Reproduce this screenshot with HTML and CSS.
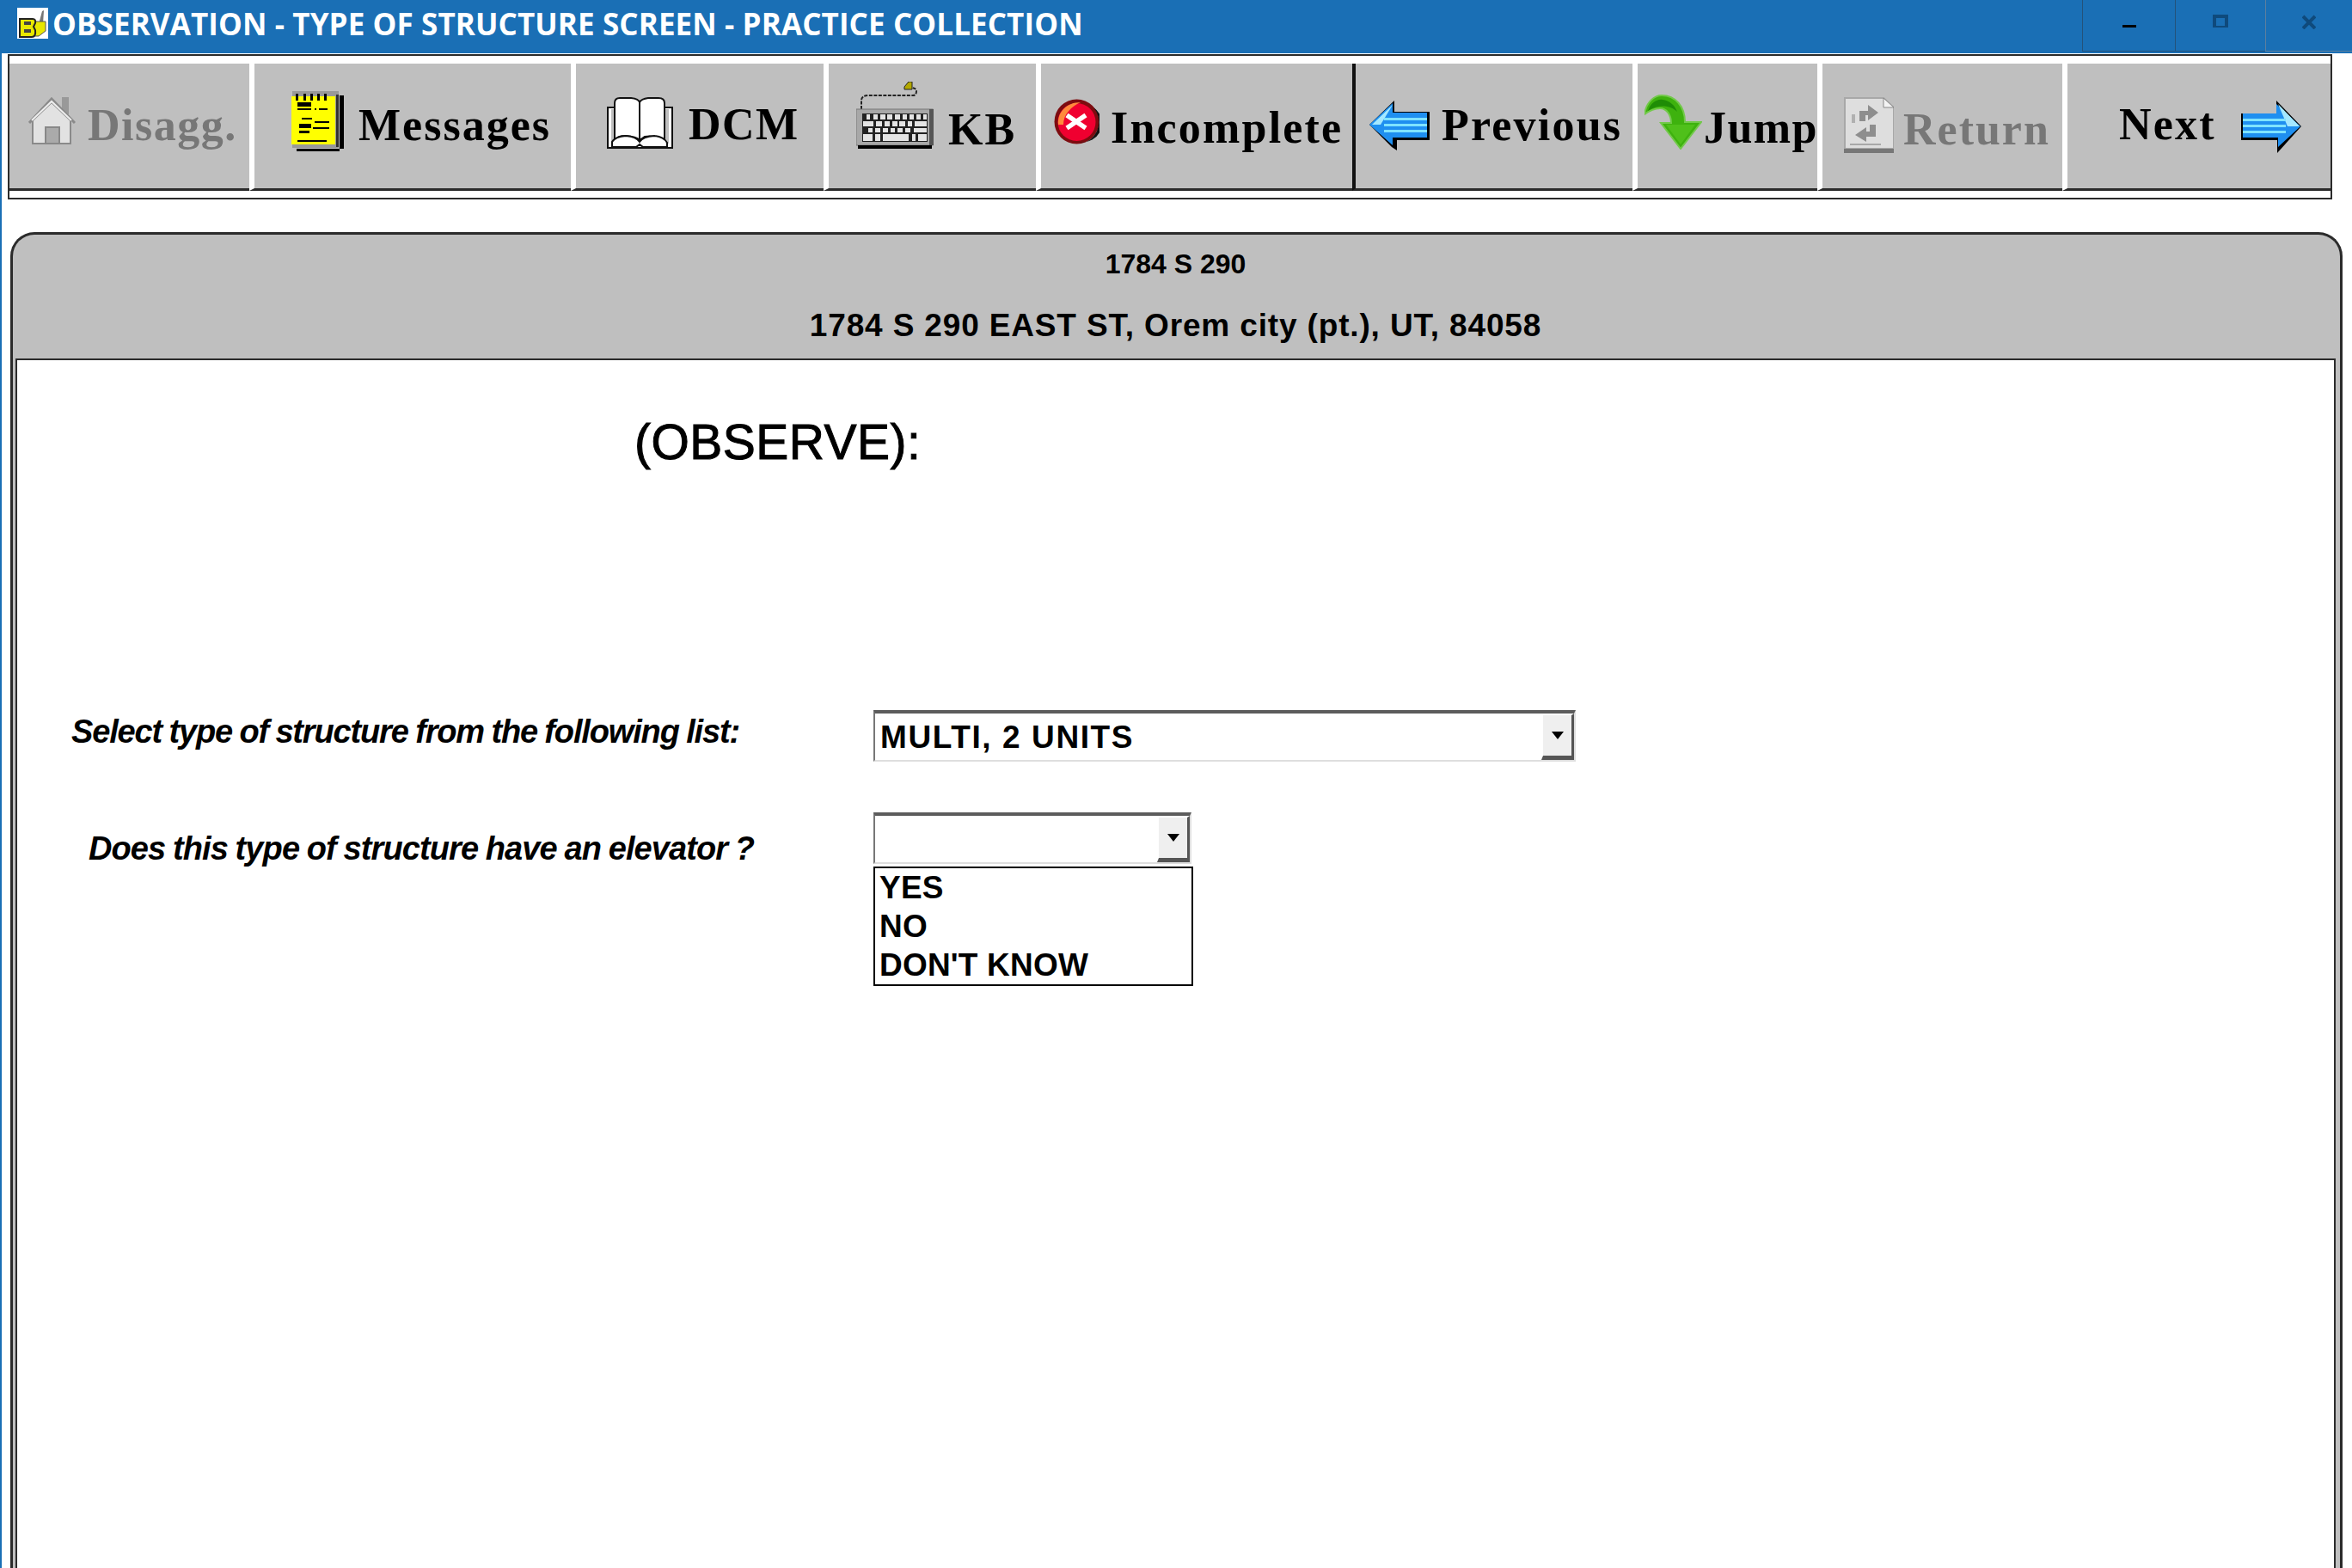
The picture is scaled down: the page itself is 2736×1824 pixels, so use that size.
FILE: index.html
```html
<!DOCTYPE html>
<html lang="en">
<head>
<meta charset="utf-8">
<title>OBSERVATION - TYPE OF STRUCTURE SCREEN - PRACTICE COLLECTION</title>
<link rel="stylesheet" href="styles.css">
</head>
<body>
<header class="titlebar">
  <svg class="appicon" viewBox="0 0 36 36">
    <rect width="36" height="36" fill="#fff"/>
    <path d="M25 19 L29 4 L31 3 L30 19 Z" fill="#777"/>
    <path d="M18 16 H33 V27 L25 33 H18 Z" fill="#e8e800" stroke="#555"/>
    <path d="M3 13 H18 Q22 13 21 18 L19 22 L21 26 Q22 34 17 34 H3 Z" fill="#e8e800" stroke="#222" stroke-width="2"/>
    <rect x="8" y="16" width="8" height="4" fill="#444"/>
    <rect x="8" y="25" width="8" height="4" fill="#444"/>
  </svg>
  <span class="title">OBSERVATION - TYPE OF STRUCTURE SCREEN - PRACTICE COLLECTION</span>
  <div class="winctls">
    <div class="winbtn"><svg width="16" height="32" viewBox="0 0 16 32"><rect y="29" width="16" height="4" fill="#000"/></svg></div>
    <div class="winbtn"><svg width="18" height="32" viewBox="0 0 18 32"><rect x="2" y="19" width="14" height="13" fill="none" stroke="#0f4a7c" stroke-width="4"/></svg></div>
    <div class="winbtn"><svg width="16" height="34" viewBox="0 0 16 34"><path d="M1 19 L15 33 M15 19 L1 33" stroke="#0f4a7c" stroke-width="4" fill="none"/></svg></div>
  </div>
</header>

<nav class="toolbar">
  <div class="btn b-disagg off">
    <svg class="ic" width="55" height="55" viewBox="0 0 55 55">
      <rect x="39" y="0" width="8" height="20" fill="#999"/>
      <path d="M5 27 L27 6 L49 27 V54 H5 Z" fill="#e2e2e2" stroke="#8a8a8a" stroke-width="2"/>
      <path d="M1 30 L27 2 L54 30" fill="none" stroke="#8a8a8a" stroke-width="3"/>
      <path d="M4 27 L27 5 L50 27" fill="none" stroke="#eee" stroke-width="2"/>
      <rect x="20" y="35" width="16" height="19" fill="#aaa" stroke="#888" stroke-width="2"/>
    </svg>
    <span class="lbl">Disagg.</span>
  </div>
  <div class="btn b-messages">
    <svg class="ic" width="61" height="71" viewBox="0 0 61 71">
      <rect x="1" y="1" width="54" height="66" fill="#999"/>
      <rect x="56" y="6" width="5" height="62" fill="#000"/>
      <rect x="6" y="68" width="50" height="3" fill="#000"/>
      <path d="M52 5 H55 V66 H52 Z" fill="#333"/>
      <rect x="0" y="7" width="51" height="56" fill="#ffff00"/>
      <g fill="#000">
        <rect x="5" y="4" width="3" height="8"/><rect x="14" y="4" width="3" height="8"/><rect x="22" y="4" width="3" height="8"/><rect x="30" y="4" width="3" height="8"/><rect x="38" y="4" width="3" height="8"/>
        <rect x="7" y="14" width="16" height="5"/><rect x="7" y="21" width="16" height="2"/><rect x="27" y="21" width="2" height="2"/><rect x="32" y="21" width="10" height="2"/>
        <rect x="12" y="32" width="12" height="2"/><rect x="27" y="36" width="17" height="2"/><rect x="9" y="39" width="14" height="5"/><rect x="25" y="43" width="19" height="2"/><rect x="9" y="47" width="12" height="3"/><rect x="7" y="58" width="34" height="2"/>
      </g>
    </svg>
    <span class="lbl">Messages</span>
  </div>
  <div class="btn b-dcm">
    <svg class="ic" width="77" height="60" viewBox="0 0 77 60">
      <path d="M1 12 H76 V59 H1 Z" fill="#fff" stroke="#111" stroke-width="2"/>
      <rect x="5" y="14" width="67" height="40" fill="#bfbfbf"/>
      <path d="M9 7 Q9 1 15 1 H28 Q37 2 38 6 Q40 2 48 1 H60 Q67 1 67 7 V50 Q55 44 44 46 L38 50 Q34 46 22 45 Q12 45 9 50 Z" fill="#fff" stroke="#111" stroke-width="2"/>
      <path d="M38 6 V55" stroke="#111" stroke-width="2"/>
      <path d="M6 58 V52 Q10 46 22 45 Q34 46 38 52 Q42 46 55 45 Q66 46 70 53 V58 H42 L38 55 L34 58 Z" fill="#fff" stroke="#111" stroke-width="2"/>
    </svg>
    <span class="lbl">DCM</span>
  </div>
  <div class="btn b-kb">
    <svg class="ic" width="91" height="78" viewBox="0 0 91 78">
      <path d="M6 32 V21 Q7 16 14 16 H66 Q70 16 70 11 Q70 7 62 7" fill="none" stroke="#222" stroke-width="2" stroke-dasharray="4 1.5"/>
      <path d="M56 6 L61 0 H65 V9 H56 Z" fill="#b3a800" stroke="#222"/>
      <rect x="0" y="32" width="89" height="42" fill="#a8a8a8" stroke="#777"/>
      <rect x="85" y="32" width="5" height="42" fill="#555"/>
      <rect x="2" y="74" width="86" height="4" fill="#000"/>
      <rect x="7" y="37" width="76" height="33" fill="#222"/>
      <g fill="#e4e4e4">
        <rect x="12" y="38" width="4" height="6"/><rect x="20" y="38" width="5" height="6"/><rect x="28" y="38" width="6" height="6"/><rect x="36" y="38" width="6" height="6"/><rect x="45" y="38" width="6" height="6"/><rect x="54" y="38" width="5" height="6"/><rect x="62" y="38" width="5" height="6"/><rect x="70" y="38" width="5" height="6"/><rect x="78" y="38" width="4" height="6"/>
        <rect x="8" y="46" width="12" height="6"/><rect x="23" y="46" width="7" height="6"/><rect x="33" y="46" width="6" height="6"/><rect x="42" y="46" width="6" height="6"/><rect x="50" y="46" width="7" height="6"/><rect x="60" y="46" width="5" height="6"/><rect x="68" y="46" width="14" height="6"/>
        <rect x="14" y="54" width="5" height="5"/><rect x="22" y="54" width="6" height="5"/><rect x="31" y="54" width="6" height="5"/><rect x="40" y="54" width="5" height="5"/><rect x="48" y="54" width="6" height="5"/><rect x="57" y="54" width="6" height="5"/><rect x="67" y="54" width="15" height="5"/>
        <rect x="8" y="61" width="11" height="8"/><rect x="22" y="61" width="6" height="8"/><rect x="31" y="61" width="30" height="8"/><rect x="65" y="61" width="4" height="8"/><rect x="72" y="61" width="10" height="8"/>
      </g>
    </svg>
    <span class="lbl">KB</span>
  </div>
  <div class="btn b-incomplete">
    <svg class="ic" width="53" height="53" viewBox="0 0 53 53">
      <ellipse cx="26.5" cy="26.5" rx="26" ry="26" fill="#7d0c10"/>
      <path d="M46 10 A26 26 0 0 1 38 50 L30 50 A22 22 0 0 0 46 10 Z" fill="#111"/>
      <circle cx="26.5" cy="27" r="22" fill="#f00030"/>
      <path d="M5 30 C4 15 15 4 31 4 C20 9 11 18 11 30 Z" fill="#ff8a3c"/>
      <path d="M15 19 L37 34 M37 19 L15 34" stroke="#fff" stroke-width="5.5" fill="none"/>
    </svg>
    <span class="lbl">Incomplete</span>
  </div>
  <div class="btn b-previous">
    <svg class="ic" width="71" height="58" viewBox="0 0 71 58">
      <path d="M30 0 V13 H71 V46 H33 V58 L27 54 L1 28 Z" fill="#000"/>
      <path d="M28 3 V14 H68 V43 H28 V52 L1 28 Z" fill="#1f8ff0"/>
      <path d="M28 5 L4 28 L14 28 Z" fill="#a5e8ff"/>
      <rect x="18" y="20" width="50" height="3" fill="#7fe3ff"/><rect x="18" y="27" width="50" height="3" fill="#7fe3ff"/><rect x="18" y="34" width="50" height="3" fill="#7fe3ff"/>
    </svg>
    <span class="lbl">Previous</span>
  </div>
  <div class="btn b-jump">
    <svg class="ic" width="67" height="64" viewBox="0 0 67 64">
      <path d="M0 23 C2 8 12 1 20 1 C36 1 47 14 47 32 L66 32 L42 63 L19 33 L31 33 C31 24 26 16 18 16 C10 16 4 20 0 23 Z" fill="#3eb20e" stroke="#72c94a" stroke-width="2"/>
      <path d="M4 19 C7 10 14 5 21 6 C29 7 35 12 38 20 C30 12 16 11 4 19 Z" fill="#1f8c06"/>
      <path d="M42 58 L59 35 H25 Z" fill="#4fc01a"/>
    </svg>
    <span class="lbl">Jump</span>
  </div>
  <div class="btn b-return off">
    <svg class="ic" width="58" height="65" viewBox="0 0 58 65">
      <path d="M1 1 H46 L58 12 V60 H1 Z" fill="#dedede" stroke="#a8a8a8" stroke-width="2"/>
      <path d="M46 1 V12 H58 Z" fill="#f3f3f3" stroke="#888"/>
      <rect x="0" y="60" width="58" height="5" fill="#777"/>
      <path d="M18 28 V16 H28 V9 L40 18 L28 27 V21 H25 V28 Z" fill="#8e8e8e"/>
      <path d="M37 32 V46 H26 V52 L13 44 L26 35 V40 H30 V32 Z" fill="#8e8e8e"/>
      <rect x="9" y="20" width="4" height="10" fill="#b0b0b0"/>
      <rect x="7" y="54" width="36" height="2" fill="#a8a8a8"/>
    </svg>
    <span class="lbl">Return</span>
  </div>
  <div class="btn b-next">
    <span class="lbl">Next</span>
    <svg class="ic" width="71" height="61" viewBox="0 0 71 61">
      <path d="M41 0 L70 30 L42 61 V46 H0 V15 H41 Z" fill="#000"/>
      <path d="M41 4 L69 30 L43 54 V43 H2 V15 H41 Z" fill="#1f8ff0"/>
      <path d="M43 4 L68 30 L54 30 Z" fill="#a5e8ff"/>
      <rect x="2" y="21" width="50" height="3" fill="#7fe3ff"/><rect x="2" y="28" width="50" height="3" fill="#7fe3ff"/><rect x="2" y="35" width="50" height="3" fill="#7fe3ff"/>
    </svg>
  </div>
</nav>

<main class="panel">
  <div class="panel-head">
    <div class="addr-short">1784 S 290</div>
    <div class="addr-full">1784 S 290 EAST ST, Orem city (pt.), UT, 84058</div>
  </div>
  <div class="content">
    <h1 class="observe">(OBSERVE):</h1>
    <div class="row row-type">
      <label class="q">Select type of structure from the following list:</label>
      <div class="combo combo-wide">
        <span class="combo-val">MULTI, 2 UNITS</span>
        <span class="combo-arrow"><i class="tri"></i></span>
      </div>
    </div>
    <div class="row row-elev">
      <label class="q">Does this type of structure have an elevator ?</label>
      <div class="combo combo-narrow">
        <span class="combo-val"></span>
        <span class="combo-arrow"><i class="tri"></i></span>
        <ul class="menu">
          <li>YES</li>
          <li>NO</li>
          <li>DON'T KNOW</li>
        </ul>
      </div>
    </div>
  </div>
</main>
</body>
</html>
```

FILE: styles.css
```css
* { box-sizing: border-box; }
html, body { margin: 0; padding: 0; }
body {
  width: 2736px;
  height: 1824px;
  overflow: hidden;
  background: #fff;
  border-left: 2px solid #1a6fb5;
  font-family: "Liberation Sans", Arial, sans-serif;
  color: #000;
}

/* title bar */
.titlebar {
  height: 62px;
  margin-left: -2px;
  background: #1a6fb5;
  display: flex;
  align-items: flex-start;
  padding-left: 20px;
}
.appicon { width: 36px; height: 36px; margin-top: 9px; flex: none; }
.title {
  margin-left: 5px;
  font-family: "Open Sans", sans-serif;
  font-weight: 700;
  font-size: 35px;
  line-height: 56px;
  letter-spacing: 0.1px;
  color: #fff;
  white-space: nowrap;
}
.winctls { margin-left: auto; display: flex; height: 60px; }
.winbtn {
  width: 107px;
  display: flex;
  justify-content: center;
  border-left: 1px solid #24527a;
  border-bottom: 1px solid #24527a;
}
.winbtn:nth-child(1) { width: 108px; }
.winbtn:nth-child(2) { width: 105px; }
.winbtn:nth-child(3) { width: 101px; border-bottom-color: #5c7f9e; border-left-color: #5c7f9e; }

/* toolbar */
.toolbar {
  margin: 1px 0 0 7px;
  width: 2704px;
  height: 169px;
  border: 2px solid #2b2b2b;
  background: #fff;
  padding: 9px 0 8px 0;
  display: flex;
  align-items: stretch;
}
.btn {
  flex: none;
  display: flex;
  align-items: flex-start;
  height: 148px;
  background: #bfbfbf;
  border-left: 6px solid #fff;
  border-bottom: 3px solid #2b2b2b;
  overflow: hidden;
}
.ic { flex: none; }
.lbl {
  font-family: "Liberation Serif", "Times New Roman", serif;
  font-weight: 700;
  font-size: 52px;
  line-height: 60px;
  letter-spacing: 2px;
  white-space: nowrap;
}
.off .lbl { color: #777; }

.b-disagg { width: 279px; border-left: 0; }
.b-disagg .ic { margin: 39px 0 0 22px; }
.b-disagg .lbl { margin: 42px 0 0 14px; letter-spacing: 1.5px; }

.b-messages { width: 374px; }
.b-messages .ic { margin: 31px 0 0 43px; }
.b-messages .lbl { margin: 42px 0 0 17px; }

.b-dcm { width: 294px; }
.b-dcm .ic { margin: 39px 0 0 36px; }
.b-dcm .lbl { margin: 41px 0 0 18px; letter-spacing: 1.5px; }

.b-kb { width: 247px; }
.b-kb .ic { margin: 21px 0 0 32px; }
.b-kb .lbl { margin: 47px 0 0 16px; }

.b-incomplete { width: 368px; }
.b-incomplete .ic { margin: 41px 0 0 15px; }
.b-incomplete .lbl { margin: 45px 0 0 13px; letter-spacing: 2.2px; }

.b-previous { width: 326px; border-left: 4px solid #111; }
.b-previous .ic { margin: 43px 0 0 15px; }
.b-previous .lbl { margin: 42px 0 0 14px; letter-spacing: 2.2px; }

.b-jump { width: 215px; }
.b-jump .ic { margin: 36px 0 0 8px; }
.b-jump .lbl { margin: 45px 0 0 2px; letter-spacing: 1.4px; }

.b-return { width: 285px; }
.b-return .ic { margin: 39px 0 0 25px; }
.b-return .lbl { margin: 47px 0 0 11px; }

.b-next { width: 312px; }
.b-next .lbl { margin: 41px 0 0 60px; letter-spacing: 2.2px; }
.b-next .ic { margin: 43px 0 0 29px; }

/* panel */
.panel {
  margin: 38px 0 0 10px;
  width: 2713px;
  height: 1560px;
  border: 3px solid #2b2b2b;
  border-bottom: 0;
  border-radius: 28px 28px 0 0;
  background: #bfbfbf;
  padding: 0 5px 0 3px;
  display: flex;
  flex-direction: column;
}
.panel-head { height: 144px; text-align: center; flex: none; }
.addr-short {
  padding-top: 14px;
  font-weight: 700;
  font-size: 32px;
  line-height: 40px;
  letter-spacing: 0;
}
.addr-full {
  padding-top: 32px;
  font-weight: 700;
  font-size: 37px;
  line-height: 40px;
  letter-spacing: 0.85px;
}
.content {
  flex: 1;
  background: #fff;
  border: 2px solid #2b2b2b;
  border-bottom: 0;
  position: relative;
}
.observe {
  margin: 0;
  padding: 63px 0 0 718px;
  font-weight: 400;
  font-size: 57px;
  line-height: 64px;
  -webkit-text-stroke: 1px #000;
  letter-spacing: 0.5px;
}

/* form rows */
.row { display: flex; align-items: flex-start; height: 60px; }
.row-type { margin-top: 280px; }
.row-elev { margin-top: 59px; }
.q {
  flex: none;
  width: 996px;
  font-weight: 700;
  font-style: italic;
  font-size: 38px;
  line-height: 60px;
  letter-spacing: -1.15px;
  word-spacing: -1px;
  white-space: nowrap;
}
.row-type .q { padding: 0 0 0 63px; margin-top: -5px; height: 60px; }
.row-elev .q { padding: 0 0 0 83px; margin-top: 12px; height: 60px; letter-spacing: -0.9px; }

.combo {
  position: relative;
  flex: none;
  height: 60px;
  display: flex;
  align-items: stretch;
  background: #fff;
  border-top: 4px solid #5c5c5c;
  border-left: 2px solid #777;
  border-bottom: 2px solid #dedede;
  border-right: 2px solid #dedede;
}
.combo-wide { width: 817px; }
.combo-narrow { width: 370px; }
.combo-val {
  flex: 1;
  padding-left: 6px;
  font-weight: 700;
  font-size: 37px;
  line-height: 56px;
  letter-spacing: 1.6px;
  white-space: nowrap;
}
.combo-arrow {
  flex: none;
  width: 38px;
  background: #efefef;
  border-top: 2px solid #fff;
  border-left: 2px solid #fff;
  border-bottom: 5px solid #555;
  border-right: 3px solid #555;
  display: flex;
  align-items: center;
  justify-content: center;
}
.tri {
  width: 0;
  height: 0;
  border-left: 7px solid transparent;
  border-right: 7px solid transparent;
  border-top: 9px solid #000;
}
.menu {
  position: absolute;
  left: -2px;
  top: 59px;
  width: 372px;
  height: 139px;
  margin: 0;
  padding: 0 0 0 5px;
  list-style: none;
  background: #fff;
  border: 2px solid #000;
  font-weight: 700;
  font-size: 37px;
  line-height: 45px;
  letter-spacing: 0.2px;
}
```
